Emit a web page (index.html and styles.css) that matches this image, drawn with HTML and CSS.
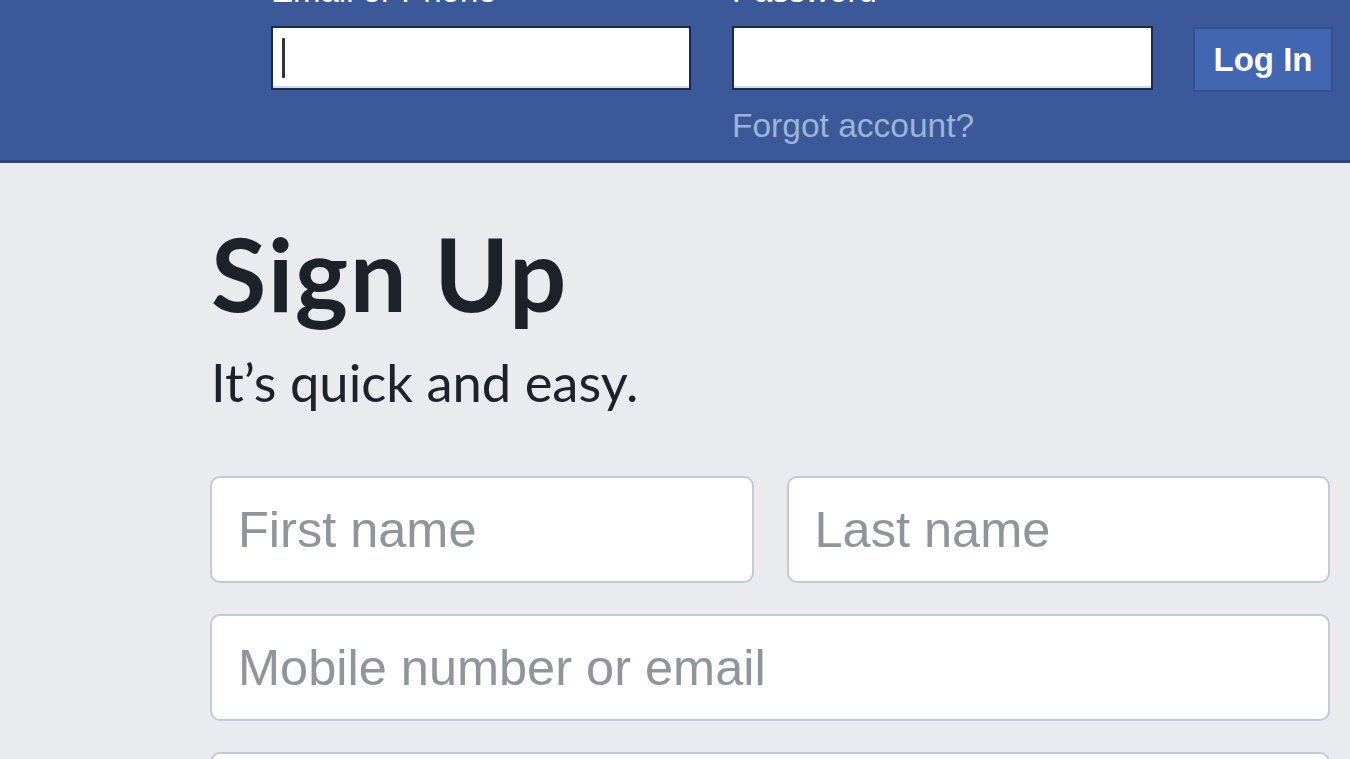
FILE: index.html
```html
<!DOCTYPE html>
<html lang="en">
<head>
<meta charset="utf-8">
<title>Facebook – Sign Up</title>
<link rel="stylesheet" href="styles.css">
</head>
<body>
<header class="topbar">
  <form class="login">
    <div class="login-col">
      <label class="login-label" for="email">Email or Phone</label>
      <div class="login-input" id="email"><span class="caret"></span></div>
    </div>
    <div class="login-col">
      <label class="login-label" for="pass">Password</label>
      <div class="login-input" id="pass"></div>
      <a class="forgot" href="#">Forgot account?</a>
    </div>
    <div class="login-col">
      <span class="login-label login-label-empty">&nbsp;</span>
      <button type="button" class="login-btn">Log In</button>
    </div>
  </form>
</header>
<main class="signup">
  <h1 class="signup-title">Sign Up</h1>
  <p class="signup-sub">It’s quick and easy.</p>
  <div class="signup-form">
    <div class="row two">
      <div class="field"><span class="ph">First name</span></div>
      <div class="field"><span class="ph">Last name</span></div>
    </div>
    <div class="row">
      <div class="field"><span class="ph">Mobile number or email</span></div>
    </div>
    <div class="row">
      <div class="field"><span class="ph">New password</span></div>
    </div>
  </div>
</main>
</body>
</html>
```

FILE: styles.css
```css
html, body {
  margin: 0;
  padding: 0;
  overflow: hidden;
}
body {
  background: #e9ebee;
  font-family: "Liberation Sans", Arial, sans-serif;
}
.topbar {
  background: #3b5998;
  height: 160px;
  border-bottom: 3px solid #2c4479;
  overflow: hidden;
}
.login {
  display: flex;
  margin: -27px 0 0 271px;
  gap: 41px;
}
.login-col {
  display: flex;
  flex-direction: column;
}
.login-col:nth-child(1) { width: 420px; }
.login-col:nth-child(2) { width: 421px; }
.login-col:nth-child(3) { width: 140px; margin-left: -1px; }
.login-label {
  color: #fff;
  font-size: 33px;
  line-height: 36px;
  height: 36px;
  margin-bottom: 17px;
  white-space: nowrap;
}
.login-input {
  box-sizing: border-box;
  height: 64px;
  background: #fff;
  border: 2px solid #1b2754;
  box-shadow: inset 0 -2px 0 #d6d9e0;
  display: flex;
  align-items: center;
  padding-left: 9px;
}
.caret {
  width: 3px;
  height: 40px;
  background: #333;
  border-radius: 1px;
}
.forgot {
  margin-top: 16px;
  color: #9cb4d8;
  font-size: 33.5px;
  line-height: 40px;
  text-decoration: none;
  white-space: nowrap;
}
.login-btn {
  box-sizing: border-box;
  margin-top: 1px;
  height: 65px;
  width: 140px;
  background: #4267b2;
  border: 2px solid #35528f;
  border-radius: 2px;
  color: #fff;
  font-family: "Liberation Sans", Arial, sans-serif;
  font-weight: bold;
  font-size: 33px;
  padding: 0;
}
.signup {
  margin: 50px 0 0 210px;
  width: 1120px;
}
.signup-title {
  margin: 0;
  font-family: Lato, "Open Sans", sans-serif;
  font-weight: bold;
  font-size: 101px;
  letter-spacing: 1.5px;
  line-height: 1.2;
  color: #1d2129;
  padding-left: 1px;
}
.signup-sub {
  margin: 16px 0 0;
  font-family: Lato, "Open Sans", sans-serif;
  font-size: 52.5px;
  line-height: 1.2;
  color: #1d2129;
  padding-left: 1px;
}
.signup-form {
  margin-top: 63px;
  display: flex;
  flex-direction: column;
  gap: 31px;
}
.row {
  display: grid;
  grid-template-columns: 1fr;
}
.row.two {
  grid-template-columns: 1fr 1fr;
  gap: 33px;
}
.field {
  box-sizing: border-box;
  height: 107px;
  background: #fff;
  border: 2px solid #c2cad8;
  border-radius: 10px;
  display: flex;
  align-items: center;
  padding-left: 26px;
}
.ph {
  color: #90949c;
  font-size: 50.5px;
  white-space: nowrap;
}
```
